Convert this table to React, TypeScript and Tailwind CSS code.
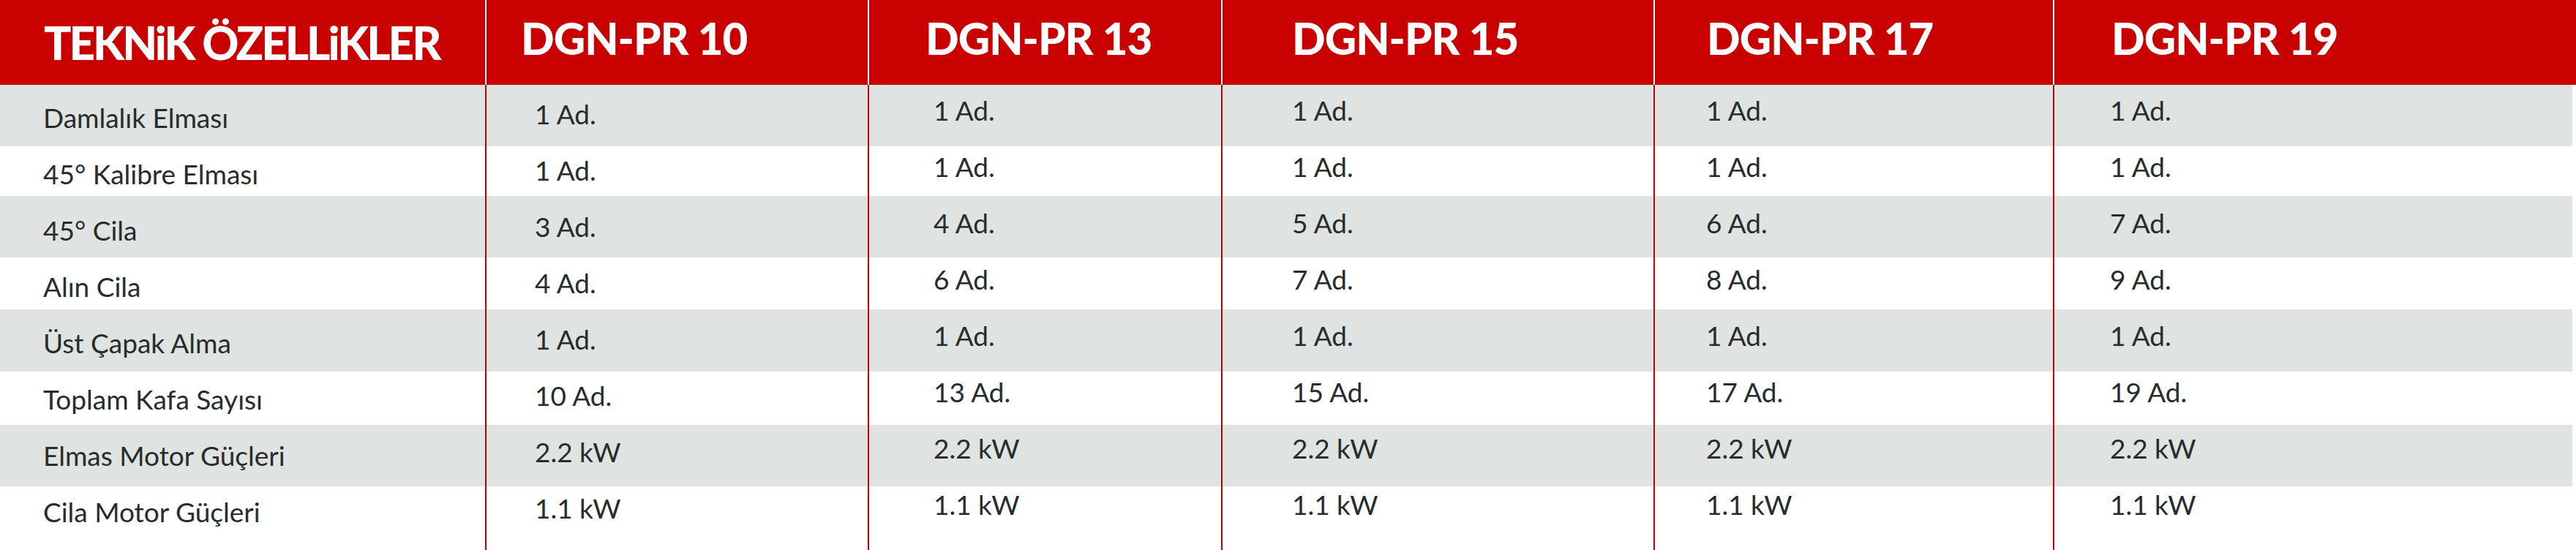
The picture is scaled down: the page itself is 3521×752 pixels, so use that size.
const heads = [
  { title: "TEKNiK ÖZELLiKLER", cls: "pl-[60px] pt-[27px] text-[62px] tracking-[-3px]" },
  { title: "DGN-PR 10", cls: "pl-[47px] pt-[22px] text-[60px] tracking-[-1px]" },
  { title: "DGN-PR 13", cls: "pl-[77px] pt-[22px] text-[60px] tracking-[-1px]" },
  { title: "DGN-PR 15", cls: "pl-[95px] pt-[22px] text-[60px] tracking-[-1px]" },
  { title: "DGN-PR 17", cls: "pl-[71px] pt-[22px] text-[60px] tracking-[-1px]" },
  { title: "DGN-PR 19", cls: "pl-[78px] pt-[22px] text-[60px] tracking-[-1px]" },
];

// left padding + small lift of the value cells, per model column
const valuePad = [
  "pl-[66px] -mt-[5px]",
  "pl-[88px] -mt-[10px]",
  "pl-[95px] -mt-[10px]",
  "pl-[70px] -mt-[10px]",
  "pl-[76px] -mt-[10px]",
];

const gray = "bg-[#dfe3e1]";

const rows = [
  { label: "Damlalık Elması", values: ["1 Ad.", "1 Ad.", "1 Ad.", "1 Ad.", "1 Ad."], h: "h-[84px]", pt: "pt-[26px]", bg: gray },
  { label: "45° Kalibre Elması", values: ["1 Ad.", "1 Ad.", "1 Ad.", "1 Ad.", "1 Ad."], h: "h-[68px]", pt: "pt-[19px]", bg: "bg-white" },
  { label: "45° Cila", values: ["3 Ad.", "4 Ad.", "5 Ad.", "6 Ad.", "7 Ad."], h: "h-[84px]", pt: "pt-[28px]", bg: gray },
  { label: "Alın Cila", values: ["4 Ad.", "6 Ad.", "7 Ad.", "8 Ad.", "9 Ad."], h: "h-[71px]", pt: "pt-[21px]", bg: "bg-white" },
  { label: "Üst Çapak Alma", values: ["1 Ad.", "1 Ad.", "1 Ad.", "1 Ad.", "1 Ad."], h: "h-[85px]", pt: "pt-[27px]", bg: gray },
  { label: "Toplam Kafa Sayısı", values: ["10 Ad.", "13 Ad.", "15 Ad.", "17 Ad.", "19 Ad."], h: "h-[73px]", pt: "pt-[19px]", bg: "bg-white" },
  { label: "Elmas Motor Güçleri", values: ["2.2 kW", "2.2 kW", "2.2 kW", "2.2 kW", "2.2 kW"], h: "h-[84px]", pt: "pt-[23px]", bg: gray },
  { label: "Cila Motor Güçleri", values: ["1.1 kW", "1.1 kW", "1.1 kW", "1.1 kW", "1.1 kW"], h: "h-[87px]", pt: "pt-[16px]", bg: "bg-white" },
];

const cols = "grid grid-cols-[663px_523px_483px_591px_546px_710px]";

function App() {
  return (
    <div className="w-[3521px] h-[752px] overflow-hidden bg-white font-['Lato',sans-serif]">
      <div className={`${cols} h-[116px] w-[3521px] bg-[#c80000] text-white font-black`}>
        {heads.map((h, i) => (
          <div
            key={i}
            className={`${h.cls} leading-none whitespace-nowrap ${i > 0 ? "border-l-2 border-white" : ""}`}
          >
            {h.title}
          </div>
        ))}
      </div>
      {rows.map((r, idx) => (
        <div key={idx} className={`${cols} w-[3516px] ${r.h} ${r.bg}`}>
          <div className={`${r.pt} pl-[59px] text-[37px] leading-none text-[#262d2c] whitespace-nowrap`}>
            {r.label}
          </div>
          {r.values.map((v, i) => (
            <div key={i} className={`border-l-2 border-[#c80000] ${r.pt}`}>
              <div className={`${valuePad[i]} text-[37px] leading-none text-[#262d2c] whitespace-nowrap`}>{v}</div>
            </div>
          ))}
        </div>
      ))}
    </div>
  );
}

export default App;
